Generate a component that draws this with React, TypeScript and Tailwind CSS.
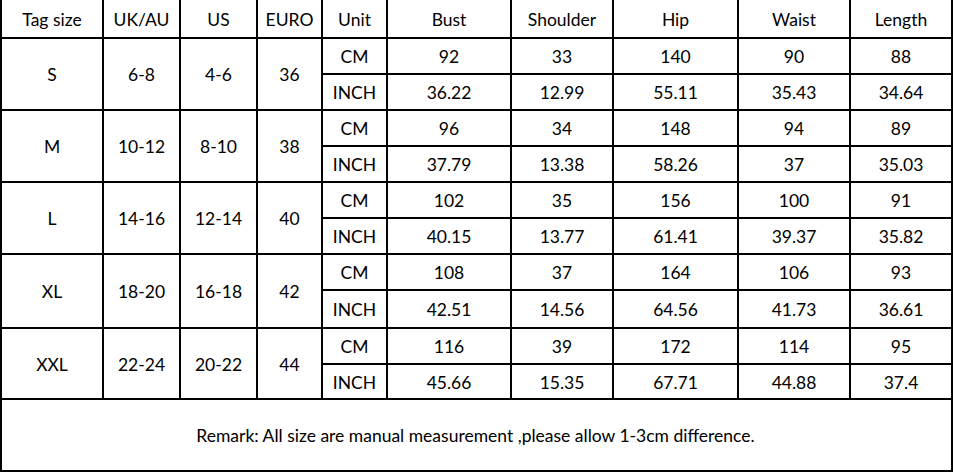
import { type ReactNode } from "react";

type SizeRow = {
  tag: string;
  uk: string;
  us: string;
  euro: string;
  cm: string[];
  inch: string[];
};

const headers = ["Tag size", "UK/AU", "US", "EURO", "Unit", "Bust", "Shoulder", "Hip", "Waist", "Length"];

const rows: SizeRow[] = [
  { tag: "S", uk: "6-8", us: "4-6", euro: "36", cm: ["92", "33", "140", "90", "88"], inch: ["36.22", "12.99", "55.11", "35.43", "34.64"] },
  { tag: "M", uk: "10-12", us: "8-10", euro: "38", cm: ["96", "34", "148", "94", "89"], inch: ["37.79", "13.38", "58.26", "37", "35.03"] },
  { tag: "L", uk: "14-16", us: "12-14", euro: "40", cm: ["102", "35", "156", "100", "91"], inch: ["40.15", "13.77", "61.41", "39.37", "35.82"] },
  { tag: "XL", uk: "18-20", us: "16-18", euro: "42", cm: ["108", "37", "164", "106", "93"], inch: ["42.51", "14.56", "64.56", "41.73", "36.61"] },
  { tag: "XXL", uk: "22-24", us: "20-22", euro: "44", cm: ["116", "39", "172", "114", "95"], inch: ["45.66", "15.35", "67.71", "44.88", "37.4"] },
];

function Cell({ children, span }: { children: ReactNode; span?: boolean }) {
  return (
    <div
      className={
        "bg-white flex items-center justify-center pt-[2px] text-black " + (span ? "row-span-2" : "")
      }
    >
      {children}
    </div>
  );
}

export default function App() {
  return (
    <div
      className="w-[953px] h-[474px] bg-white overflow-hidden text-[17.5px] leading-none"
      style={{ fontFamily: "Lato, 'Open Sans', sans-serif" }}
    >
      {/* ---- size chart ---- */}
      <div className="grid bg-black gap-[2px] px-[2px] pb-[2px] grid-cols-[100px_75px_75px_63px_63px_122px_100px_123px_110px_100px] grid-rows-[37px_34px_34px_34px_34px_34px_34px_34px_36px_34px_33px_70px]">
        {headers.map((h) => (
          <Cell key={h}>{h}</Cell>
        ))}
        {rows.map((r) => [
          <Cell key={r.tag + "t"} span>{r.tag}</Cell>,
          <Cell key={r.tag + "u"} span>{r.uk}</Cell>,
          <Cell key={r.tag + "s"} span>{r.us}</Cell>,
          <Cell key={r.tag + "e"} span>{r.euro}</Cell>,
          <Cell key={r.tag + "cm"}>CM</Cell>,
          ...r.cm.map((v, i) => <Cell key={r.tag + "c" + i}>{v}</Cell>),
          <Cell key={r.tag + "in"}>INCH</Cell>,
          ...r.inch.map((v, i) => <Cell key={r.tag + "i" + i}>{v}</Cell>),
        ])}
        <div className="col-span-10 bg-white flex items-center justify-center pt-[2px] text-black pr-[2px]">
          Remark: All size are manual measurement ,please allow 1-3cm difference.
        </div>
      </div>
    </div>
  );
}
